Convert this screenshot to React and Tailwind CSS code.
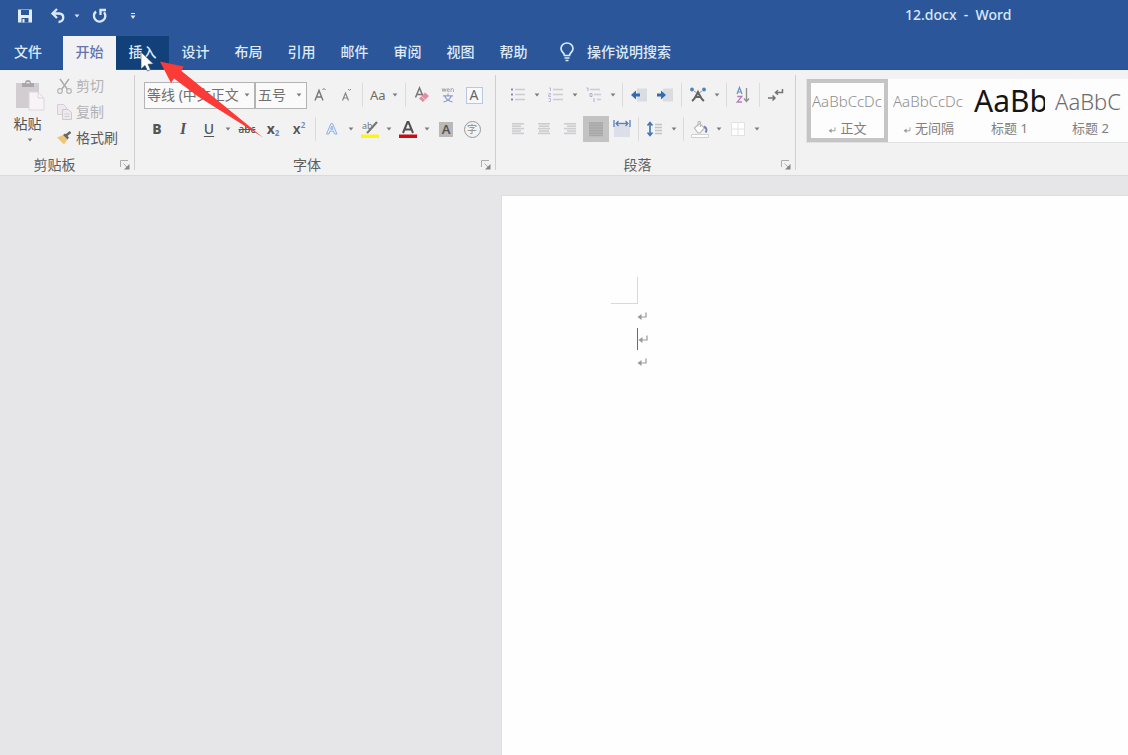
import React from "react";

const FONT = "font-['Noto_Sans','Noto_Sans_CJK_SC',sans-serif]";

function Caret({ className = "" }) {
  return (
    <svg viewBox="0 0 6 4" className={"h-1 w-1.5 shrink-0 fill-[#7b7b7b] " + className} aria-hidden="true">
      <path d="M0.6 0.6h4.8L3 3.4z" />
    </svg>
  );
}

function Tool({ label, caret, active, children }) {
  return (
    <button
      type="button"
      aria-label={label}
      className={"flex h-[26px] shrink-0 items-center " + (active ? "bg-[#c3c3c4]" : "")}
    >
      <span className="flex w-[26px] items-center justify-center">{children}</span>
      {caret && (
        <span className="flex w-3 items-center justify-center">
          <Caret />
        </span>
      )}
    </button>
  );
}

function Sep() {
  return (
    <span className="flex w-[7px] shrink-0 justify-center">
      <span className="h-6 w-px bg-[#dcdadc]" />
    </span>
  );
}

function Icon({ children }) {
  return (
    <svg viewBox="0 0 20 20" className="size-5" fill="none" aria-hidden="true">
      {children}
    </svg>
  );
}

function Group({ title, children, className = "" }) {
  return (
    <section className={"my-[5px] flex shrink-0 flex-col border-r border-[#cfcfd2] " + className}>
      <div className="h-20 shrink-0">{children}</div>
      <footer className="flex h-5 shrink-0 items-center text-sm leading-4 text-[#5e5e5e]">
        <span className="flex-1 pr-2.5 text-center">{title}</span>
        <button type="button" aria-label={title + "设置"} className="mr-[3px] flex size-3 items-center justify-center">
          <svg viewBox="0 0 10 10" className="size-2.5" fill="none" stroke="#adadad" aria-hidden="true">
            <path d="M0.5 7V0.5H8M3.5 3.5l4 4" />
            <path d="M9.500 4v5.500H4z" fill="#858585" stroke="none" />
          </svg>
        </button>
      </footer>
    </section>
  );
}

function Dropdown({ label, value, className }) {
  return (
    <label className={"relative flex h-[27px] items-center border border-[#b4b4b6] bg-[#fafafa] " + className}>
      <span className="sr-only">{label}</span>
      <select
        defaultValue={value}
        className="w-full appearance-none bg-transparent pl-0.5 text-sm leading-5 text-[#707070] outline-none"
      >
        <option>{value}</option>
      </select>
      <Caret className="pointer-events-none absolute right-1" />
    </label>
  );
}

function TitleBar() {
  return (
    <header className="flex h-9 items-center pb-1 text-[#dbe8fa]">
      <div className="flex w-[905px] shrink items-center pl-[17px]">
        <button type="button" aria-label="保存" className="mr-[17px]">
          <svg viewBox="0 0 16 16" className="size-4" aria-hidden="true">
            <path d="M1 1.500h14v13H1z" fill="#e3eefc" />
            <path d="M4 2h8v5H4zM4.500 10h7v4.500h-7z" fill="#2b579a" />
            <path d="M5.500 11h2v3.500h-2z" fill="#e3eefc" />
          </svg>
        </button>
        <button type="button" aria-label="撤消" className="flex items-center">
          <svg viewBox="0 0 16 16" className="size-4" fill="none" stroke="#dbe8fa" strokeWidth="2.300" aria-hidden="true">
            <path d="M7 1L2.500 5.500L7 10M2.500 5.500H9c6 0.500 5.500 8-0.500 8.500" />
          </svg>
          <Caret className="ml-2 fill-[#dbe8fa]" />
        </button>
        <button type="button" aria-label="恢复" className="ml-3">
          <svg viewBox="0 0 16 16" className="size-4" fill="none" stroke="#dbe8fa" strokeWidth="2.300" aria-hidden="true">
            <path d="M4 3.500A5.700 5.700 0 1 0 12 4.200M8.500 7V2H14" />
          </svg>
        </button>
        <button type="button" aria-label="自定义快速访问工具栏" className="ml-[21px]">
          <svg viewBox="0 0 8 8" className="size-2" fill="#dbe8fa" aria-hidden="true">
            <path d="M2 1h4v1H2zM1.500 3.500h5L4 7z" />
          </svg>
        </button>
      </div>
      <h1 className="pb-0.5 text-sm leading-5 font-medium whitespace-pre">12.docx  -  Word</h1>
    </header>
  );
}

const TABS = ["设计", "布局", "引用", "邮件", "审阅", "视图", "帮助"];

function Tabs() {
  return (
    <nav className="flex h-[34px] border-b border-[#1d5698] text-sm leading-5 font-medium text-[#dfe9f8]">
      <button type="button" className="w-[63px] pr-[7px] pb-0.5">文件</button>
      <button type="button" className="-mb-px w-[53px] bg-[#f2f2f4] pb-0.5 text-[#6476ad]">开始</button>
      <button type="button" className="w-[53px] bg-[#124078] pb-0.5">插入</button>
      {TABS.map((t) => (
        <button type="button" key={t} className="w-[53px] pb-0.5">{t}</button>
      ))}
      <button type="button" className="flex items-center pb-0.5 pl-[19px]">
        <svg viewBox="0 0 16 20" className="mr-3 h-5 w-4" fill="none" stroke="#d3ecff" strokeWidth="1.700" aria-hidden="true">
          <path d="M5.500 13.500c0-2.500-3.500-3.500-3.500-7a6 5.500 0 0 1 12 0c0 3.500-3.500 4.500-3.500 7z" />
          <path d="M5.500 16h5M6.500 18.500h3" />
        </svg>
        操作说明搜索
      </button>
    </nav>
  );
}

function Clipboard() {
  return (
    <Group title="剪贴板" className="w-[135px]">
      <div className="flex">
        <button type="button" className="flex w-[55px] flex-col items-center pt-1 text-sm leading-5 text-[#555]">
          <svg viewBox="0 0 30 32" className="ml-1 h-8 w-[30px]" aria-hidden="true">
            <path d="M1 4h23v25H1z" fill="#d2cdd1" />
            <path d="M7 8V4h3a3 3 0 0 1 6 0h3v4z" fill="#aaa6a9" />
            <path d="M11.500 4.500h3V3h-3z" fill="#e9e6e9" />
            <path d="M14 13h9l6 6v12H14z" fill="#f7f3f7" stroke="#ded5dd" />
            <path d="M23 13v6h6" fill="none" stroke="#ded5dd" />
          </svg>
          <span className="mt-[3px]">粘贴</span>
          <Caret className="mt-1 ml-1" />
        </button>
        <div className="flex flex-col text-sm leading-[26px] text-[#b3b1b3]">
          <button type="button" className="flex h-[26px] items-center pb-1">
            <Icon>
              <path d="M5 3l7.500 10.500M14 3L6.500 13.500" stroke="#aaa" strokeWidth="1.400" />
              <circle cx="5" cy="15" r="2.300" stroke="#b5b5b5" strokeWidth="1.200" />
              <circle cx="14" cy="15" r="2.300" stroke="#b5b5b5" strokeWidth="1.200" />
            </Icon>
            <span className="pl-px">剪切</span>
          </button>
          <button type="button" className="flex h-[26px] items-center pb-1">
            <Icon>
              <path d="M2.500 2.500h6l3 3v7h-9z" fill="#eee9ee" stroke="#d5ced5" />
              <path d="M7.500 7.500h6l3 3v7h-9z" fill="#eee9ee" stroke="#cfc8cf" />
              <path d="M9.500 12h5M9.500 14.500h5" stroke="#d5ced5" />
            </Icon>
            <span className="pl-px">复制</span>
          </button>
          <button type="button" className="flex h-[26px] items-center pb-1 text-[#5c5c5c]">
            <Icon>
              <path d="M2 9.500l6-2.500 4.500 4.500L9 16.500z" fill="#efc578" />
              <path d="M8 7l2-1.500 4 4-1.500 2z" fill="#666" />
              <path d="M11 7.500L15.500 4" stroke="#666" strokeWidth="2.500" />
            </Icon>
            <span className="pl-px">格式刷</span>
          </button>
        </div>
      </div>
    </Group>
  );
}

function FontGroup() {
  return (
    <Group title="字体" className="w-[361px] pl-[9px]">
      <div className="flex flex-col gap-2 pt-[7px]">
        <div className="flex h-[26px] items-center">
          <Dropdown label="字体" value="等线 (中文正文" className="w-[111px]" />
          <Dropdown label="字号" value="五号" className="w-[52px]" />
          <Tool label="增大字号">
            <Icon>
              <path d="M5 15.500L9 5.500l4 10M6.500 12h5" stroke="#777" strokeWidth="1.400" />
              <path d="M12.500 5l1.500-1.500L15.500 5" stroke="#777" />
            </Icon>
          </Tool>
          <Tool label="减小字号">
            <Icon>
              <path d="M6.500 15.500l3-7.500 3 7.500M7.500 13h4" stroke="#858585" strokeWidth="1.200" />
              <path d="M12 4l1.500 1.500L15 4" stroke="#858585" />
            </Icon>
          </Tool>
          <Sep />
          <button type="button" className="flex h-[26px] w-9 items-center gap-1.5 pl-1 text-[13px] leading-5 text-[#6c6c6c]">
            Aa
            <Caret />
          </button>
          <Sep />
          <Tool label="清除格式">
            <Icon>
              <path d="M3.500 12.500L7.500 3l4 9.500M5 9.500h5" stroke="#777" strokeWidth="1.500" />
              <path d="M7 13.500l6-6 4 3.500-6 6z" fill="#e58aa0" />
              <path d="M9.300 11.300l4 3.500" stroke="#f6d3dc" />
            </Icon>
          </Tool>
          <Tool label="拼音指南">
            <Icon>
              <path d="M4 3.500l1 3 1-3 1 3 1-3M9 5h2.500c0-2-2.500-2-2.500 0s1.500 2 2.500 1.500M13 7V3.500M13 4.500c1-1.500 2.500-1 2.500 0V7" stroke="#a3a3a8" strokeWidth="0.900" />
              <path d="M10 8.500v2M5 10.800h10M6.800 11c1 3 4 5 7.700 6M13.200 11c-1 3-4 5-7.700 6" stroke="#8f9fcb" strokeWidth="1.200" />
            </Icon>
          </Tool>
          <Tool label="字符边框">
            <span className="flex size-[17px] items-center justify-center border border-[#b9c6e4] bg-[#f8f9fc] text-sm leading-4 text-[#666]">A</span>
          </Tool>
        </div>
        <div className="flex h-[26px] items-center text-[#555]">
          <Tool label="加粗"><span className="text-sm leading-5 font-extrabold">B</span></Tool>
          <Tool label="倾斜"><span className="font-['Liberation_Serif',serif] text-base leading-5 font-bold italic">I</span></Tool>
          <Tool label="下划线" caret><span className="text-sm leading-4 font-medium underline underline-offset-2">U</span></Tool>
          <Tool label="删除线"><span className="text-[10px] leading-4 font-medium line-through">abc</span></Tool>
          <Tool label="下标">
            <span className="flex items-end text-sm leading-5 font-bold">x<span className="text-[8px] leading-3 text-[#6d86bb]">2</span></span>
          </Tool>
          <Tool label="上标">
            <span className="flex items-start text-sm leading-5 font-semibold">x<span className="text-[8px] leading-3 text-[#6d86bb]">2</span></span>
          </Tool>
          <Sep />
          <Tool label="文本效果" caret>
            <Icon>
              <path d="M4.500 15L9 4.500h1.500L15 15h-2.500l-1-2.800H8L7 15zM8.700 10.300h2.200L9.800 7z" fill="#e7effc" stroke="#8fb0e6" />
            </Icon>
          </Tool>
          <Tool label="突出显示" caret>
            <Icon>
              <path d="M1 15.500h18V19H1z" fill="#fdf51a" />
              <path d="M17 3L8.500 12.500L7 14" stroke="#777" strokeWidth="2.200" />
              <text x="2" y="10" fontSize="9" fill="#777">ab</text>
            </Icon>
          </Tool>
          <Tool label="字体颜色" caret>
            <Icon>
              <path d="M1 15.500h18V19H1z" fill="#cf0a12" />
              <path d="M5 14L9.500 3h1L15 14M6.500 10.500h7" stroke="#505050" strokeWidth="2" />
            </Icon>
          </Tool>
          <Tool label="字符底纹">
            <span className="flex h-[15px] w-[14px] items-center justify-center bg-[#b9b9ba] text-[13px] leading-4 font-semibold text-[#555]">A</span>
          </Tool>
          <Tool label="带圈字符">
            <span className="flex size-[17px] items-center justify-center rounded-full border border-[#999] text-[10px] leading-3 text-[#888]">字</span>
          </Tool>
        </div>
      </div>
    </Group>
  );
}

function Lines({ rows }) {
  return (
    <Icon>
      {rows.map(([x, w], i) => (
        <rect key={i} x={x} y={4 + i * 2.4} width={w} height="1.600" fill="#cdcdcf" />
      ))}
    </Icon>
  );
}

function Paragraph() {
  return (
    <Group title="段落" className="w-[300px] pl-[9px]">
      <div className="flex flex-col gap-2 pt-[7px]">
        <div className="flex h-[26px] items-center">
          <Tool label="项目符号" caret>
            <Icon>
              <path d="M7 4.500h10M7 9.500h10M7 14.500h10" stroke="#cbcbd0" strokeWidth="1.400" />
              <path d="M3 3.500h2v2H3zM3 8.500h2v2H3zM3 13.500h2v2H3z" fill="#8689b8" />
            </Icon>
          </Tool>
          <Tool label="编号" caret>
            <Icon>
              <path d="M7 4.500h10M7 9.500h10M7 14.500h10" stroke="#cbcbd0" strokeWidth="1.400" />
              <path d="M3 3h1.500v3M2.500 8.500h2v1.500h-2v1.500h2.500M2.500 13.500h2v3h-2" stroke="#b5b6d5" strokeWidth="0.900" />
            </Icon>
          </Tool>
          <Tool label="多级列表" caret>
            <Icon>
              <path d="M6 4.500h10M10 9.500h7M13 14.500h4" stroke="#cbcbd0" strokeWidth="1.400" />
              <path d="M2.500 3h1.500v3M6 8.500h2v3H6zM10 13v4" stroke="#aaa7cc" strokeWidth="0.900" />
            </Icon>
          </Tool>
          <Sep />
          <Tool label="减少缩进">
            <Icon>
              <path d="M8 3.500h10v13H8z" fill="#d9dce3" />
              <path d="M2 10l5-4.500v3h4v3H7v3z" fill="#356bb5" />
            </Icon>
          </Tool>
          <Tool label="增加缩进">
            <Icon>
              <path d="M8 3.500h10v13H8z" fill="#d9dce3" />
              <path d="M11 10L6 5.500v3H2v3h4v3z" fill="#356bb5" />
            </Icon>
          </Tool>
          <Sep />
          <Tool label="中文版式" caret>
            <Icon>
              <path d="M4 16C7 14 8 11 10 7c2 4 3 7 6 9M7.500 12h5" stroke="#636363" strokeWidth="2" />
              <circle cx="4" cy="4.500" r="1.900" fill="#4d82ba" />
              <circle cx="16" cy="4.500" r="1.900" fill="#4d82ba" />
              <path d="M6 6l3 2M14 6l-3 2" stroke="#999" />
            </Icon>
          </Tool>
          <Sep />
          <Tool label="排序">
            <Icon>
              <path d="M4 9l2.500-6.500L9 9M5 7h3" stroke="#6c8fc6" strokeWidth="1.200" />
              <path d="M4.200 11.500H8.800L4.200 17H9" stroke="#b57fc0" strokeWidth="1.300" />
              <path d="M13.500 3v13M11 13.500l2.500 3 2.500-3" stroke="#8e8e8e" strokeWidth="1.300" />
            </Icon>
          </Tool>
          <Sep />
          <Tool label="显示编辑标记">
            <Icon>
              <path d="M16.500 4v3.500H10M12 5.300L9.500 7.500 12 9.700M2 13h7M6.500 10.500L9 13l-2.500 2.500" stroke="#737373" strokeWidth="1.500" />
            </Icon>
          </Tool>
        </div>
        <div className="flex h-[26px] items-center">
          <Tool label="左对齐"><Lines rows={[[4, 12], [4, 9], [4, 12], [4, 9], [4, 12]]} /></Tool>
          <Tool label="居中"><Lines rows={[[4, 12], [5, 10], [4, 12], [5, 10], [4, 12]]} /></Tool>
          <Tool label="右对齐"><Lines rows={[[4, 12], [7, 9], [4, 12], [7, 9], [4, 12]]} /></Tool>
          <Tool label="两端对齐" active>
            <Icon>
              <path d="M3 3.500h14v13.500H3z" fill="#b4b4b5" />
              <path d="M3 4h14M3 6.500h14M3 9h14M3 11.500h14M3 14h14M3 16.500h14" stroke="#a8a8a9" strokeWidth="1.700" />
            </Icon>
          </Tool>
          <Tool label="分散对齐">
            <Icon>
              <path d="M2 6h16v12H2z" fill="#dcdfe8" />
              <path d="M2 1v7M18 1v7M4 4.500h12M6.500 2L4 4.500 6.500 7M13.500 2L16 4.500 13.500 7" stroke="#5a80b8" strokeWidth="1.300" />
            </Icon>
          </Tool>
          <Sep />
          <Tool label="行距" caret>
            <Icon>
              <path d="M5 4v12M2.500 6.500L5 3.500l2.500 3M2.500 13.500L5 16.500l2.500-3" stroke="#4678b8" strokeWidth="1.700" />
              <path d="M10 5.500h7M10 8.500h7M10 11.500h7M10 14.500h7" stroke="#c3c3c7" strokeWidth="1.400" />
            </Icon>
          </Tool>
          <Sep />
          <Tool label="底纹" caret>
            <Icon>
              <path d="M1.500 15.500h17v3h-17z" fill="#fff" stroke="#d0d0d2" />
              <path d="M4.500 9l5-4.500 5 4.500-4.500 5h-2z" fill="#fff" stroke="#bbb" strokeWidth="1.200" />
              <path d="M8 7.500V2.500h2.500V8" stroke="#bbb" />
              <path d="M14 7.500c3 1.500 3 4 1.500 6" stroke="#7585b8" strokeWidth="2" />
            </Icon>
          </Tool>
          <Tool label="边框" caret>
            <Icon>
              <path d="M3.500 3.500h13v13h-13zM10 3.500v13M3.500 10h13" fill="#fff" stroke="#e2e2e4" />
            </Icon>
          </Tool>
        </div>
      </div>
    </Group>
  );
}

const STYLES = [
  { name: "正文", mark: true, sample: "AaBbCcDc", look: "text-[15px] font-light text-[#8d8d8d]", on: true },
  { name: "无间隔", mark: true, sample: "AaBbCcDc", look: "text-[15px] font-light text-[#8d8d8d]" },
  { name: "标题 1", sample: "AaBb", look: "text-3xl text-[#151515]" },
  { name: "标题 2", sample: "AaBbC", look: "text-[22px] font-light text-[#6b6b6b]" },
  { name: "标题", sample: "AaBb", look: "text-3xl font-light text-[#444]" },
];

function StyleGallery() {
  return (
    <section aria-label="样式" className="mt-[9px] ml-[10px] flex h-[64px] min-w-0 flex-1 overflow-hidden border-b border-l border-[#e2e2e5] bg-[#fdfdfd]">
      {STYLES.map((s) => (
        <button
          type="button"
          key={s.name}
          className={"flex w-[81px] shrink-0 flex-col items-center border-4 px-px " + (s.on ? "border-[#c5c5c5]" : "border-transparent")}
        >
          <span className={"flex h-9 w-full items-center overflow-hidden leading-9 whitespace-nowrap " + s.look}>{s.sample}</span>
          <span className="flex items-center gap-1 text-[13px] leading-[18px] text-[#808080]">
            {s.mark && <ReturnMark small />}
            {s.name}
          </span>
        </button>
      ))}
    </section>
  );
}

function ReturnMark({ small }) {
  return (
    <svg viewBox="0 0 10 8" className={small ? "mt-1 h-1.5 w-2" : "h-2 w-2.5"} fill="none" stroke="#999" strokeWidth="1.200" aria-hidden="true">
      <path d="M9 0.500V5H2" />
      <path d="M4.500 2L0.500 5l4 3z" fill="#999" stroke="none" />
    </svg>
  );
}

function Document() {
  return (
    <main className="flex flex-1 border-t border-[#dadadc] bg-[#e6e6e8] pt-[19px] pl-[501px]">
      <article className="flex-1 border-t border-l border-[#dededf] bg-[#fefefe] pt-[81px] pl-[109px]">
        <div className="size-[27px] border-r border-b border-[#d9d9d9]" />
        <p className="flex h-[23px] items-center pl-[26px]"><ReturnMark /></p>
        <p className="flex h-[23px] items-center pl-[26px]">
          <span className="h-[22px] w-px bg-[#6b6b6b]" />
          <ReturnMark />
        </p>
        <p className="flex h-[23px] items-center pl-[26px]"><ReturnMark /></p>
      </article>
    </main>
  );
}

function Pointer() {
  return (
    <svg viewBox="0 0 130 90" className="pointer-events-none absolute top-[50px] left-[138px] h-[90px] w-[130px]" aria-hidden="true">
      <path d="M3 2v17l4-3.500 2.500 5.500 3-1.300-2.500-5.500 5.500-0.200z" fill="#fff" stroke="#333c55" strokeWidth="0.600" />
      <path d="M22 11.500L45.500 16.500L43.500 21L62 36L125 87.500L60 46.500L36 28.500L33 33z" fill="#fb3b38" />
    </svg>
  );
}

export default function App() {
  return (
    <div className={"relative flex min-h-screen flex-col overflow-hidden bg-[#2b579a] " + FONT}>
      <TitleBar />
      <Tabs />
      <div className="flex h-[105px] bg-[#f2f2f3]">
        <Clipboard />
        <FontGroup />
        <Paragraph />
        <StyleGallery />
      </div>
      <Document />
      <Pointer />
    </div>
  );
}
